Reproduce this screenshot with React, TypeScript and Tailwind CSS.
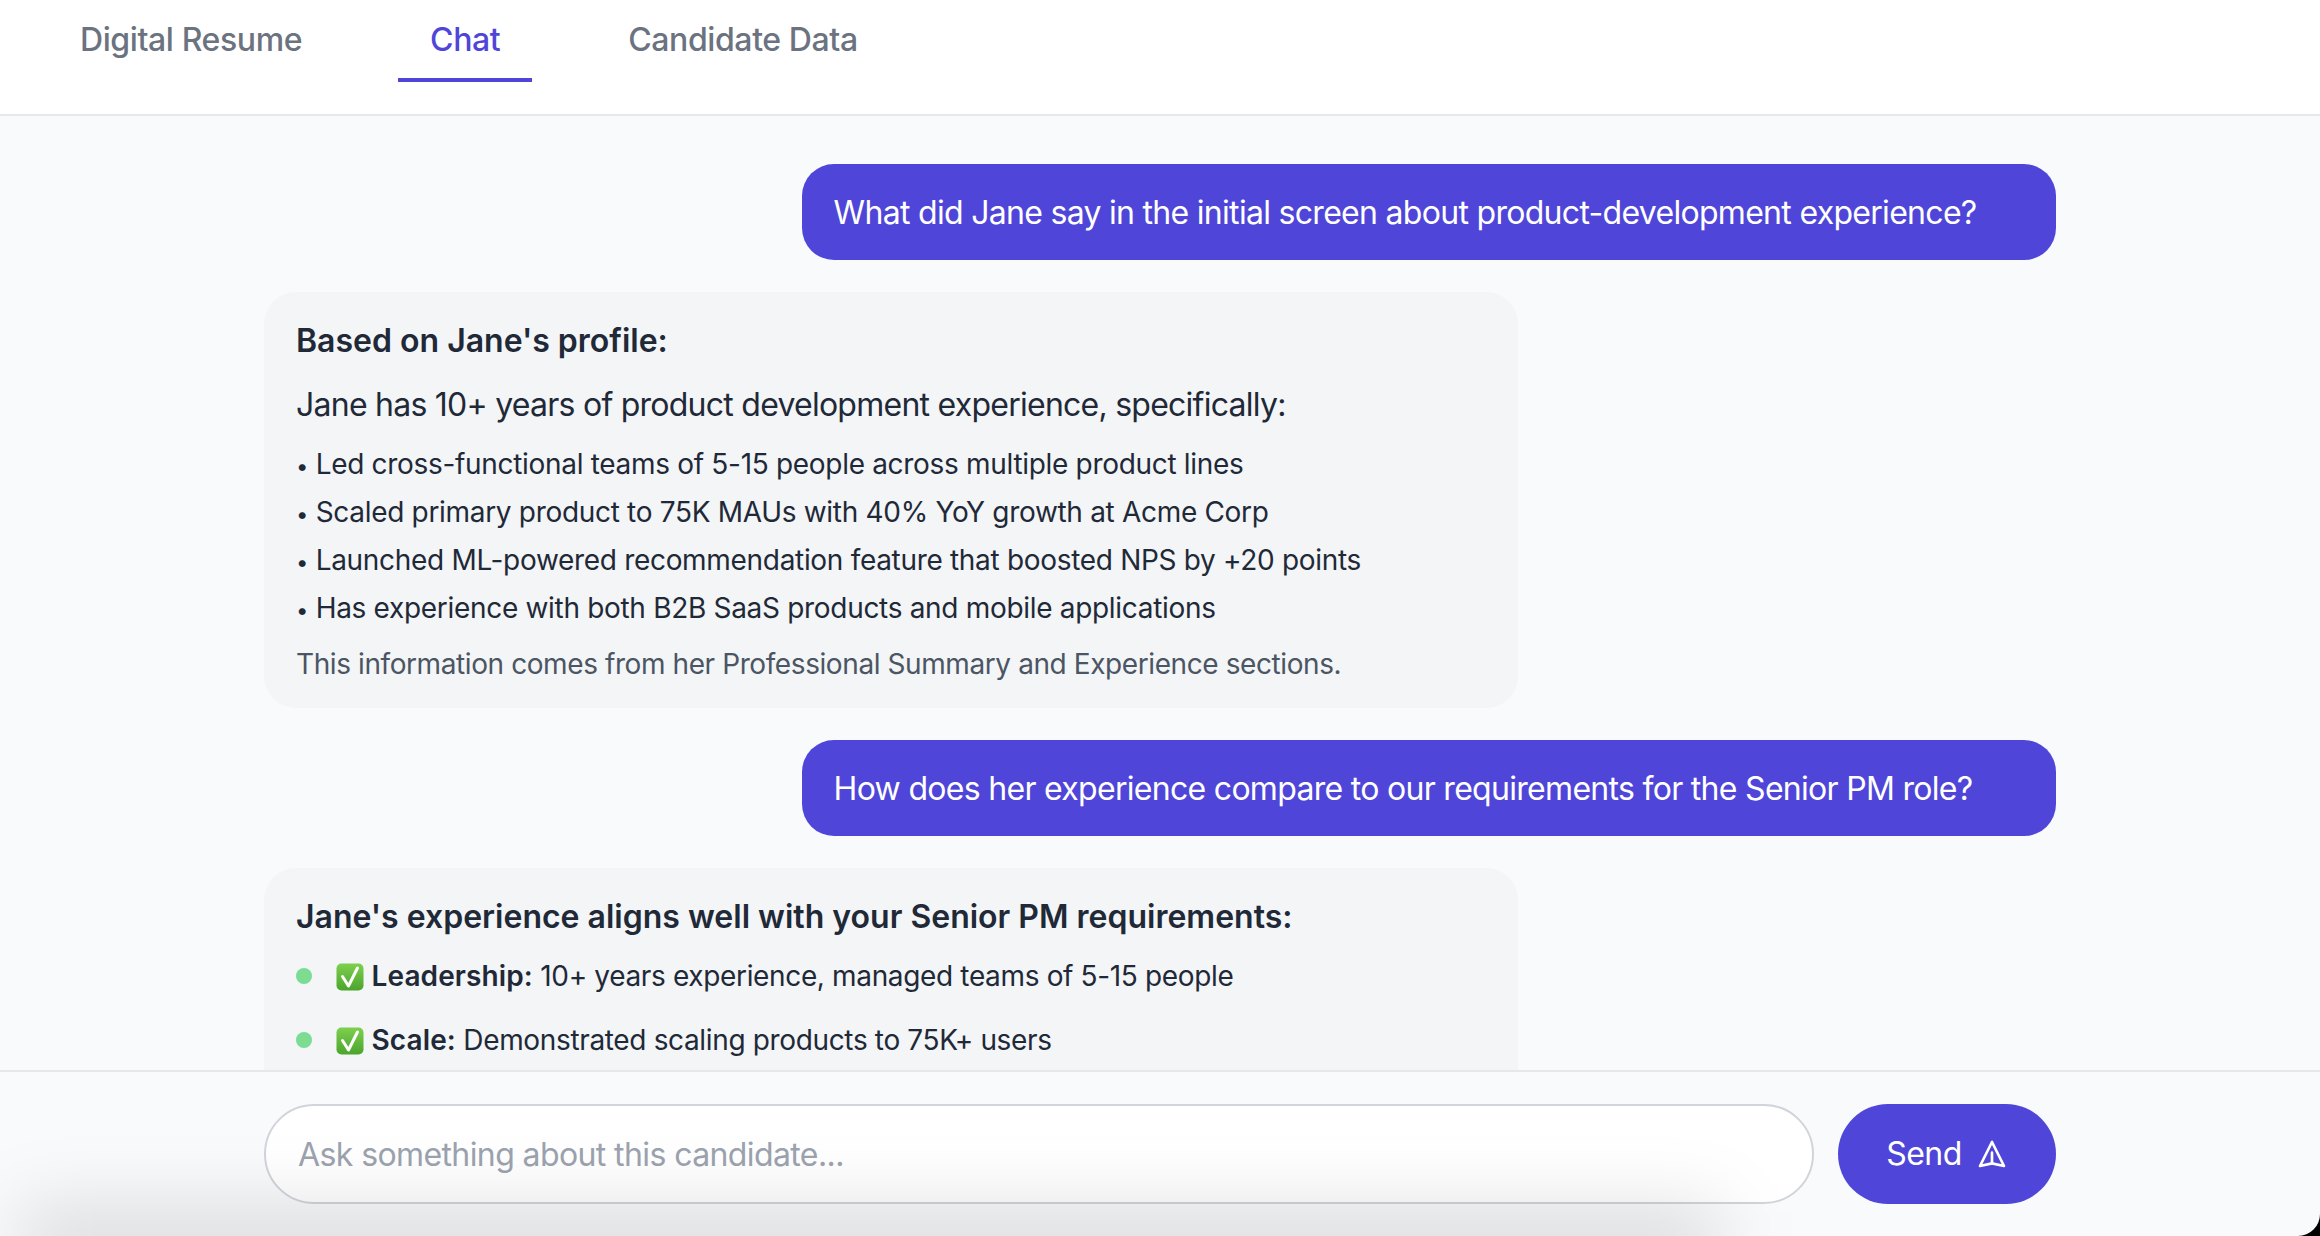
const tabs = [
  { label: 'Digital Resume', active: false },
  { label: 'Chat', active: true },
  { label: 'Candidate Data', active: false },
]

const summaryPoints = [
  'Led cross-functional teams of 5-15 people across multiple product lines',
  'Scaled primary product to 75K MAUs with 40% YoY growth at Acme Corp',
  'Launched ML-powered recommendation feature that boosted NPS by +20 points',
  'Has experience with both B2B SaaS products and mobile applications',
]

const requirements = [
  { label: 'Leadership:', text: '10+ years experience, managed teams of 5-15 people' },
  { label: 'Scale:', text: 'Demonstrated scaling products to 75K+ users' },
]

function CheckEmoji() {
  return (
    <svg viewBox="0 0 28 28" className="inline-block w-[28px] h-[28px] align-[-5px]">
      <defs>
        <linearGradient id="check-green" x1="0" y1="0" x2="0" y2="1">
          <stop offset="0" stopColor="#7fcf4e" />
          <stop offset="1" stopColor="#4aa52c" />
        </linearGradient>
      </defs>
      <rect x="0.5" y="0.5" width="27" height="27" rx="5" fill="url(#check-green)" />
      <path d="M6.5 13.5l6 9.5 9-18" fill="none" stroke="#fff" strokeWidth="3" strokeLinejoin="round" strokeLinecap="round" />
    </svg>
  )
}

function UserBubble({ children }: { children: string }) {
  return (
    <div className="flex justify-end">
      <div className="w-[70%] rounded-[32px] bg-[#4f46d9] px-8 pt-[25px] pb-[23px] text-[32px] leading-[48px] tracking-[-0.7px] text-white">
        {children}
      </div>
    </div>
  )
}

export default function App() {
  return (
    <div className="relative flex h-screen flex-col overflow-hidden bg-[#f9fafc] font-['Inter',sans-serif]">
      <header className="shrink-0 border-b-2 border-[#e5e7eb] bg-white px-12 pb-8">
        <nav className="flex gap-16">
          {tabs.map((tab) => (
            <button
              key={tab.label}
              className={
                tab.active
                  ? 'border-b-4 border-[#4f46d9] px-8 pt-[16px] pb-[14px] text-[32px] leading-[48px] font-medium tracking-[-0.4px] text-[#4f46d9]'
                  : 'border-b-4 border-transparent px-8 pt-[16px] pb-[14px] text-[32px] leading-[48px] font-medium tracking-[-0.4px] text-[#6b7280]'
              }
            >
              {tab.label}
            </button>
          ))}
        </nav>
      </header>

      <main className="min-h-0 flex-1 overflow-hidden">
        <div className="mx-auto flex w-[1792px] flex-col gap-8 pt-12">
          <UserBubble>What did Jane say in the initial screen about product-development experience?</UserBubble>

          <div className="w-[70%] rounded-[32px] bg-[#f3f5f7] px-8 pt-[25px] pb-6 text-[#1f2937]">
            <p className="mb-4 text-[32px] leading-[48px] font-semibold">Based on Jane's profile:</p>
            <p className="mb-[15px] text-[32px] leading-[48px] tracking-[-0.75px]">Jane has 10+ years of product development experience, specifically:</p>
            <ul className="mb-4 flex flex-col gap-2 text-[28px] leading-[40px] tracking-[-0.31px]">
              {summaryPoints.map((point) => (
                <li key={point}>
                  <span className="text-[22px] leading-none">•</span> {point}
                </li>
              ))}
            </ul>
            <p className="text-[28px] leading-[40px] tracking-[-0.41px] text-[#4b5563]">
              This information comes from her Professional Summary and Experience sections.
            </p>
          </div>

          <UserBubble>How does her experience compare to our requirements for the Senior PM role?</UserBubble>

          <div className="w-[70%] rounded-[32px] bg-[#f3f5f7] px-8 pt-[25px] pb-16 text-[#1f2937]">
            <p className="mb-[15px] text-[32px] leading-[48px] font-semibold">Jane's experience aligns well with your Senior PM requirements:</p>
            <ul className="flex flex-col gap-6 text-[28px] leading-[40px] tracking-[-0.35px]">
              {requirements.map((item) => (
                <li key={item.label} className="flex items-center gap-6">
                  <span className="h-4 w-4 shrink-0 rounded-full bg-[#7bdc92]" />
                  <span>
                    <CheckEmoji /> <strong className="font-semibold tracking-[0.1px]">{item.label}</strong> {item.text}
                  </span>
                </li>
              ))}
            </ul>
          </div>
        </div>
      </main>

      <footer className="shrink-0 border-t-2 border-[#e5e7eb] py-8">
        <div className="mx-auto flex h-[100px] w-[1792px] gap-6">
          <input
            placeholder="Ask something about this candidate..."
            className="min-w-0 flex-1 rounded-full border-2 border-[#d1d5db] bg-white px-8 pt-[2px] text-[32px] tracking-[-0.6px] text-[#1f2937] outline-none placeholder:text-[#9ca3af]"
          />
          <button className="flex w-[218px] items-center justify-center gap-[14px] rounded-full bg-[#4f46d9] text-[32px] tracking-[-0.6px] text-white">
            Send
            <svg viewBox="0 0 24 24" fill="none" stroke="currentColor" strokeWidth="2" strokeLinecap="round" strokeLinejoin="round" className="h-8 w-8">
              <path d="M12 19l9 2-9-18-9 18 9-2zm0 0v-8" />
            </svg>
          </button>
        </div>
      </footer>

      {/* window shadow and rounded corner caught in the capture */}
      <div className="pointer-events-none absolute -bottom-[36px] left-[20px] h-[64px] w-[1700px] bg-black/[0.13] blur-[36px]" />
      <svg viewBox="0 0 22 22" className="pointer-events-none absolute right-0 bottom-0 h-[22px] w-[22px]">
        <path d="M22 0A22 22 0 0 1 0 22H22Z" fill="#000" />
      </svg>
    </div>
  )
}
